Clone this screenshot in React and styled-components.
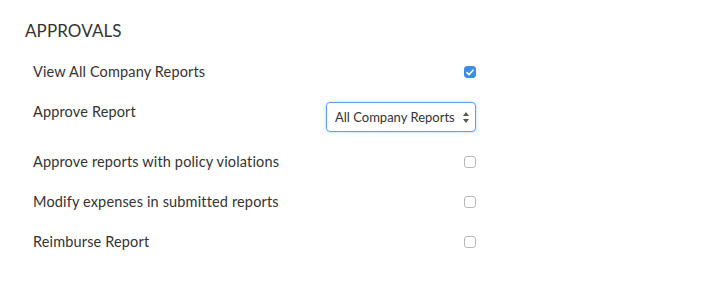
import styled, { createGlobalStyle } from "styled-components";

const GlobalStyle = createGlobalStyle`
  body {
    margin: 0;
    background: #fff;
    font-family: "Lato", "Open Sans", sans-serif;
    color: #333;
  }
`;

const Wrapper = styled.div`
  width: 705px;
  height: 290px;
  padding: 21px 0 0 25px;
  box-sizing: border-box;
`;

const Title = styled.div`
  font-size: 17px;
  line-height: 20px;
  letter-spacing: 0.1px;
  color: #333;
  margin-bottom: 11px;
`;

const List = styled.div`
  width: 443px;
  margin-left: 8px;
  display: flex;
  flex-direction: column;
`;

const Row = styled.div`
  display: flex;
  justify-content: space-between;
  align-items: flex-start;
  padding: 10px 0;
`;

const Label = styled.div`
  font-size: 14.5px;
  line-height: 20px;
  letter-spacing: 0.15px;
  color: #333;
`;

const CheckBox = styled.span`
  width: 12px;
  height: 12px;
  margin-top: 4px;
  box-sizing: border-box;
  border-radius: 3px;
  border: 1px solid ${(p) => (p.$checked ? "#3a8ee6" : "#b8b8b8")};
  background: ${(p) => (p.$checked ? "#3a8ee6" : "#fff")};
  display: flex;
  align-items: center;
  justify-content: center;
`;

const Select = styled.div`
  width: 150px;
  height: 30px;
  box-sizing: border-box;
  border: 1px solid #5aa2ea;
  border-radius: 4px;
  box-shadow: 0 0 3px rgba(90, 162, 234, 0.5);
  display: flex;
  align-items: center;
  gap: 4px;
  padding: 0 6px 0 8px;
  font-size: 13px;
  color: #333;
`;

const SelectText = styled.span`
  flex: 1;
  white-space: nowrap;
  overflow: hidden;
`;

function Check({ checked }) {
  return (
    <CheckBox $checked={checked}>
      {checked && (
        <svg width="8" height="7" viewBox="0 0 8 7">
          <path d="M1 3.6 L3 5.6 L7 1.2" fill="none" stroke="#fff" strokeWidth="1.6" strokeLinecap="round" strokeLinejoin="round" />
        </svg>
      )}
    </CheckBox>
  );
}

function Arrows() {
  return (
    <svg width="6" height="11" viewBox="0 0 6 11">
      <path d="M3 0 L6 4 L0 4 Z" fill="#555" />
      <path d="M3 11 L6 7 L0 7 Z" fill="#555" />
    </svg>
  );
}

const rows = [
  { label: "Approve reports with policy violations", checked: false },
  { label: "Modify expenses in submitted reports", checked: false },
  { label: "Reimburse Report", checked: false },
];

function App() {
  return (
    <Wrapper>
      <GlobalStyle />
      <Title>APPROVALS</Title>
      <List>
        <Row>
          <Label>View All Company Reports</Label>
          <Check checked />
        </Row>
        <Row>
          <Label>Approve Report</Label>
          <Select>
            <SelectText>All Company Reports</SelectText>
            <Arrows />
          </Select>
        </Row>
        {rows.map((r) => (
          <Row key={r.label}>
            <Label>{r.label}</Label>
            <Check checked={r.checked} />
          </Row>
        ))}
      </List>
    </Wrapper>
  );
}

export default App;
